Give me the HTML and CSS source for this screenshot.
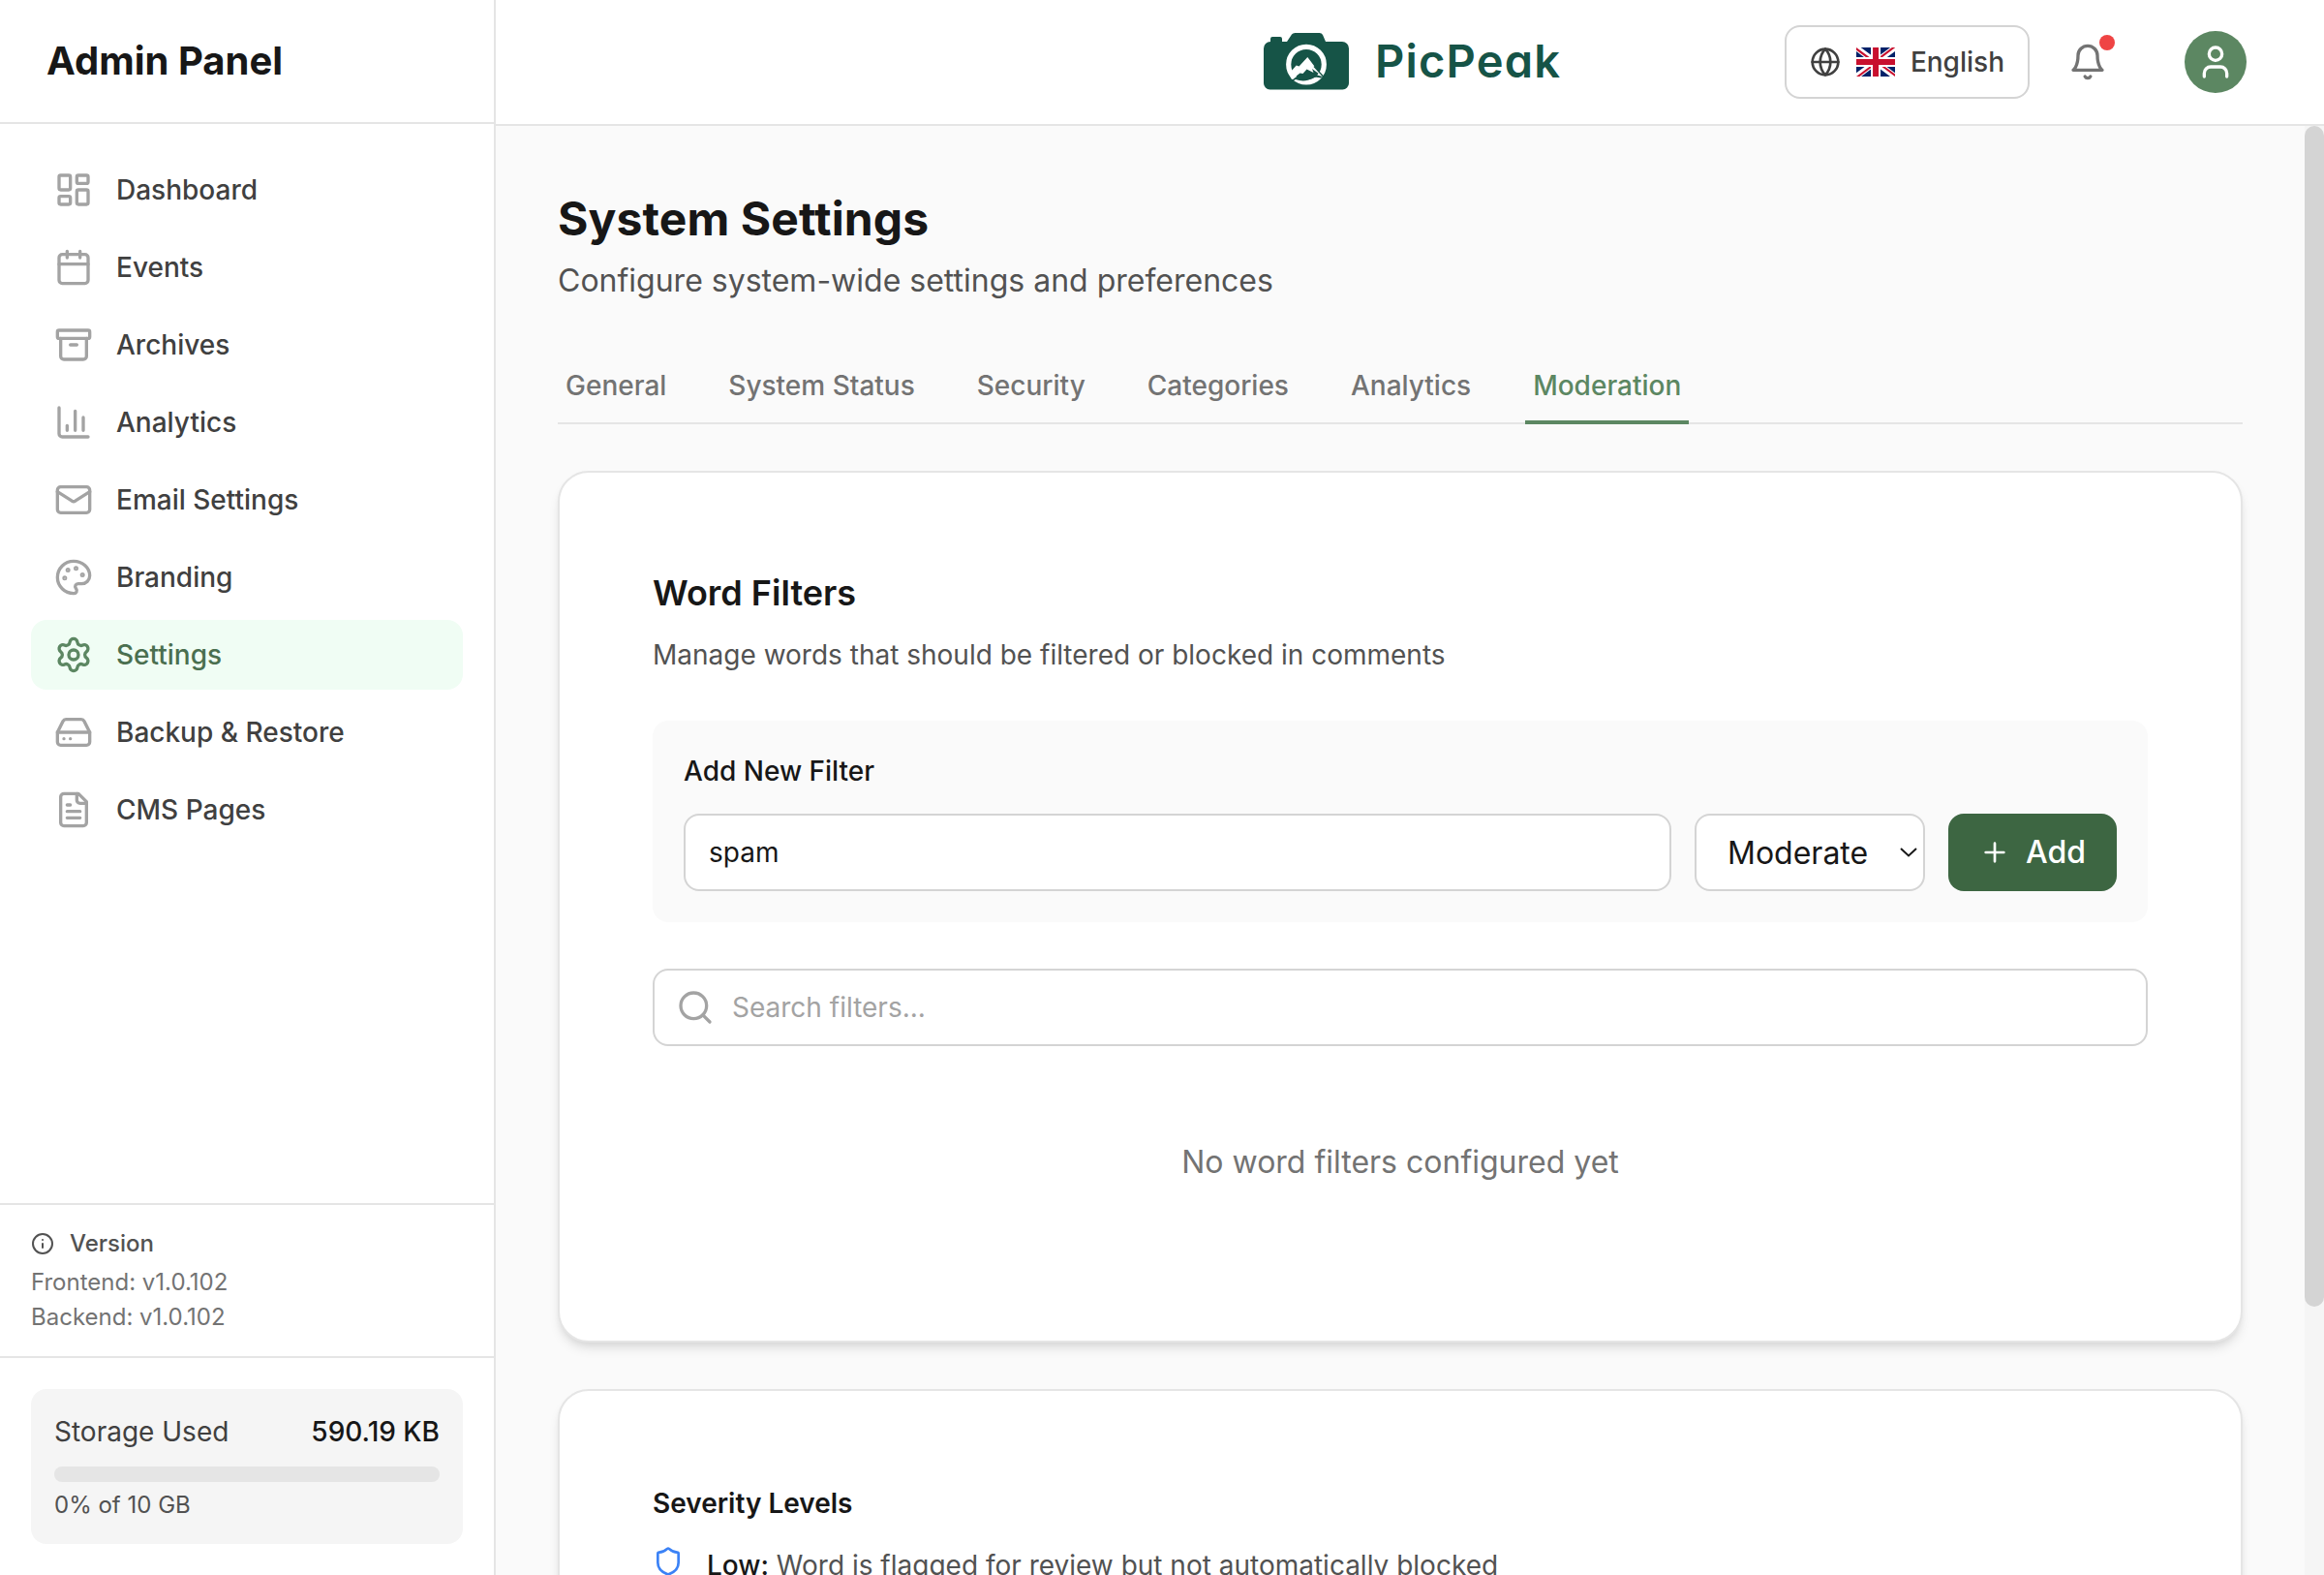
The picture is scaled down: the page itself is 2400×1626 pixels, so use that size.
FILE: index.html
```html
<!DOCTYPE html>
<html lang="en">
<head>
<meta charset="utf-8">
<title>System Settings - PicPeak</title>
<link rel="stylesheet" href="styles.css">
</head>
<body>
<div class="app">
  <aside class="sidebar">
    <div class="sidebar-title">Admin Panel</div>
    <nav class="nav">
      <a class="nav-item"><svg class="icon" viewBox="0 0 24 24"><rect width="7" height="9" x="3" y="3" rx="1"/><rect width="7" height="5" x="14" y="3" rx="1"/><rect width="7" height="9" x="14" y="12" rx="1"/><rect width="7" height="5" x="3" y="16" rx="1"/></svg>Dashboard</a>
      <a class="nav-item"><svg class="icon" viewBox="0 0 24 24"><path d="M8 2v4M16 2v4"/><rect width="18" height="18" x="3" y="4" rx="2"/><path d="M3 10h18"/></svg>Events</a>
      <a class="nav-item"><svg class="icon" viewBox="0 0 24 24"><rect width="20" height="5" x="2" y="3" rx="1"/><path d="M4 8v11a2 2 0 0 0 2 2h12a2 2 0 0 0 2-2V8"/><path d="M10 12h4"/></svg>Archives</a>
      <a class="nav-item"><svg class="icon" viewBox="0 0 24 24"><path d="M3 3v16a2 2 0 0 0 2 2h16"/><path d="M18 17V9M13 17V5M8 17v-3"/></svg>Analytics</a>
      <a class="nav-item"><svg class="icon" viewBox="0 0 24 24"><path d="m22 7-8.991 5.727a2 2 0 0 1-2.009 0L2 7"/><rect width="20" height="16" x="2" y="4" rx="2"/></svg>Email Settings</a>
      <a class="nav-item"><svg class="icon" viewBox="0 0 24 24"><path d="M12 22a1 1 0 0 1 0-20 10 9 0 0 1 10 9 5 5 0 0 1-5 5h-2.25a1.75 1.75 0 0 0-1.4 2.8l.3.4a1.75 1.75 0 0 1-1.4 2.8z"/><g fill="currentColor"><circle cx="13.5" cy="6.5" r=".5"/><circle cx="17.5" cy="10.5" r=".5"/><circle cx="6.5" cy="12.5" r=".5"/><circle cx="8.5" cy="7.5" r=".5"/></g></svg>Branding</a>
      <a class="nav-item nav-item-active"><svg class="icon" viewBox="0 0 24 24"><path d="M9.671 4.136a2.34 2.34 0 0 1 4.659 0 2.34 2.34 0 0 0 3.319 1.915 2.34 2.34 0 0 1 2.33 4.033 2.34 2.34 0 0 0 0 3.831 2.34 2.34 0 0 1-2.33 4.033 2.34 2.34 0 0 0-3.319 1.915 2.34 2.34 0 0 1-4.659 0 2.34 2.34 0 0 0-3.32-1.915 2.34 2.34 0 0 1-2.33-4.033 2.34 2.34 0 0 0 0-3.831A2.34 2.34 0 0 1 6.35 6.051a2.34 2.34 0 0 0 3.319-1.915"/><circle cx="12" cy="12" r="3"/></svg>Settings</a>
      <a class="nav-item"><svg class="icon" viewBox="0 0 24 24"><path d="M22 12H2"/><path d="M5.45 5.11 2 12v6a2 2 0 0 0 2 2h16a2 2 0 0 0 2-2v-6l-3.45-6.89A2 2 0 0 0 16.76 4H7.24a2 2 0 0 0-1.79 1.11z"/><path d="M6 16h.01M10 16h.01"/></svg>Backup &amp; Restore</a>
      <a class="nav-item"><svg class="icon" viewBox="0 0 24 24"><path d="M15 2H6a2 2 0 0 0-2 2v16a2 2 0 0 0 2 2h12a2 2 0 0 0 2-2V7Z"/><path d="M14 2v4a2 2 0 0 0 2 2h4"/><path d="M10 9H8M16 13H8M16 17H8"/></svg>CMS Pages</a>
    </nav>
    <div class="version">
      <div class="version-title"><svg class="icon icon-xs" viewBox="0 0 24 24"><circle cx="12" cy="12" r="10"/><path d="M12 16v-4M12 8h.01"/></svg>Version</div>
      <div class="version-line">Frontend: v1.0.102</div>
      <div class="version-line">Backend: v1.0.102</div>
    </div>
    <div class="storage">
      <div class="storage-card">
        <div class="storage-row"><span>Storage Used</span><strong>590.19 KB</strong></div>
        <div class="storage-bar"></div>
        <div class="storage-note">0% of 10 GB</div>
      </div>
    </div>
  </aside>
  <div class="page">
    <header class="topbar">
      <div class="logo">
        <svg class="logo-mark" viewBox="0 0 88 59"><path fill="#165447" d="M7 9V6a2 2 0 0 1 2-2h8a2 2 0 0 1 2 2v3h5l5-7.500Q30 0 32.500 0h25Q60 0 61 2l3 7h17a7 7 0 0 1 7 7v36a6.500 6.500 0 0 1-6.500 6.500h-75A6.500 6.500 0 0 1 0 52V16a7 7 0 0 1 7-7z"/><circle cx="44" cy="32.600" r="18.300" fill="none" stroke="#fff" stroke-width="5.200"/><path fill="#fff" d="M28 40l5.700-6.500 2.800 1L45.300 25 54 36.500l7 8.500-11-8 1.500 4-7-3.500-4 4.500-3-.5L29 48l-2-4z"/><path fill="#165447" d="M27 50.500c5-3 7-7.500 13.500-7.500 3 0 5-2 8-1.500 3.500.5 7 2.500 12 3.500l-1.500 1.500c-4-1-6.500-1-9 .5-5 3-11.500 3-17 1-1.500.5-3 1.500-4.500 3z"/><path fill="none" stroke="#165447" stroke-width="1.300" d="M52 34.500l10 11"/></svg>
        <span class="logo-text">PicPeak</span>
      </div>
      <div class="actions">
        <button class="language"><svg class="icon icon-sm" viewBox="0 0 24 24"><circle cx="12" cy="12" r="10"/><path d="M12 2a14.500 14.500 0 0 0 0 20 14.500 14.500 0 0 0 0-20"/><path d="M2 12h20"/></svg><svg class="flag" viewBox="0 0 640 480"><path fill="#012169" d="M0 0h640v480H0z"/><path fill="#FFF" d="m75 0 244 181L562 0h78v62L400 241l240 178v61h-80L320 301 81 480H0v-60l239-178L0 64V0z"/><path fill="#C8102E" d="m424 281 216 159v40L369 281zm-184 20 6 35L54 480H0zM640 0v3L391 191l2-44L590 0zM0 0l239 176h-60L0 42z"/><path fill="#FFF" d="M241 0v480h160V0zM0 160v160h640V160z"/><path fill="#C8102E" d="M0 193v96h640v-96zM273 0v480h96V0z"/></svg>English</button>
        <div class="bell"><svg class="icon" viewBox="0 0 24 24"><path d="M6 8a6 6 0 0 1 12 0c0 7 3 9 3 9H3s3-2 3-9"/><path d="M10.300 21a1.940 1.940 0 0 0 3.400 0"/></svg><span class="bell-dot"></span></div>
        <div class="avatar"><svg class="icon" viewBox="0 0 24 24"><path d="M19 21v-2a4 4 0 0 0-4-4H9a4 4 0 0 0-4 4v2"/><circle cx="12" cy="7" r="4"/></svg></div>
      </div>
    </header>
    <div class="body">
      <main class="content">
        <h1>System Settings</h1>
        <p class="subtitle">Configure system-wide settings and preferences</p>
        <nav class="tabs">
          <a class="tab">General</a><a class="tab">System Status</a><a class="tab">Security</a><a class="tab">Categories</a><a class="tab">Analytics</a><a class="tab tab-active">Moderation</a>
        </nav>
        <section class="card">
          <h2>Word Filters</h2>
          <p class="card-text">Manage words that should be filtered or blocked in comments</p>
          <div class="add-box">
            <h3>Add New Filter</h3>
            <div class="add-row">
              <div class="field word-field">spam</div>
              <div class="field select"><span>Moderate</span><svg class="chevron" viewBox="0 0 18 10"><path d="m1 1 8 7.500L17 1"/></svg></div>
              <button class="add-button"><svg class="icon icon-sm" viewBox="0 0 24 24"><path d="M5 12h14M12 5v14"/></svg>Add</button>
            </div>
          </div>
          <div class="field search"><svg class="icon" viewBox="0 0 24 24"><path d="m21 21-4.300-4.300"/><circle cx="11" cy="11" r="8"/></svg>Search filters...</div>
          <p class="empty">No word filters configured yet</p>
        </section>
        <section class="card">
          <h3 class="levels-title">Severity Levels</h3>
          <div class="level"><svg class="icon icon-sm" viewBox="0 0 24 24"><path d="M20 13c0 5-3.500 7.500-7.660 8.950a1 1 0 0 1-.67-.01C7.500 20.500 4 18 4 13V6a1 1 0 0 1 1-1c2 0 4.500-1.200 6.240-2.720a1.170 1.170 0 0 1 1.520 0C14.510 3.810 17 5 19 5a1 1 0 0 1 1 1z"/></svg><p><strong>Low:</strong> Word is flagged for review but not automatically blocked</p></div>
        </section>
      </main>
      <div class="scrollbar"><div class="scrollbar-thumb"></div></div>
    </div>
  </div>
</div>
</body>
</html>
```
FILE: styles.css
```css
* { box-sizing: border-box; margin: 0; padding: 0; }

body {
  height: 1626px;
  overflow: hidden;
  font-family: Inter, "Liberation Sans", sans-serif;
  font-size: 28px;
  line-height: 40px;
  color: #171717;
  background: #fafafa;
}

button { font: inherit; }

.app { display: flex; height: 1626px; }

.icon {
  display: block;
  flex: none;
  width: 40px;
  height: 40px;
  fill: none;
  stroke: currentColor;
  stroke-width: 2;
  stroke-linecap: round;
  stroke-linejoin: round;
}
.icon-sm { width: 32px; height: 32px; }
.icon-xs { width: 24px; height: 24px; }

/* Sidebar */
.sidebar {
  flex: none;
  display: flex;
  flex-direction: column;
  width: 512px;
  background: #fff;
  border-right: 2px solid #e5e5e5;
}
.sidebar-title {
  display: flex;
  align-items: center;
  height: 128px;
  padding: 0 48px;
  border-bottom: 2px solid #e5e5e5;
  font-size: 40px;
  font-weight: 700;
}
.nav {
  flex: 1;
  display: flex;
  flex-direction: column;
  gap: 8px;
  padding: 32px;
}
.nav-item {
  display: flex;
  align-items: center;
  gap: 24px;
  height: 72px;
  padding: 0 24px;
  border-radius: 16px;
  font-weight: 500;
  color: #404040;
}
.nav-item .icon { color: #a3a3a3; }
.nav-item-active { background: #f0fdf4; color: #4a6f4f; }
.nav-item-active .icon { color: #5c8762; }

.version {
  padding: 24px 32px;
  border-top: 2px solid #e5e5e5;
  border-bottom: 2px solid #e5e5e5;
  font-size: 24px;
  line-height: 32px;
  color: #737373;
}
.version-title {
  display: flex;
  align-items: center;
  gap: 16px;
  margin-bottom: 8px;
  font-weight: 500;
  color: #525252;
}
.version-line + .version-line { margin-top: 4px; }

.storage { padding: 32px; }
.storage-card { padding: 24px; border-radius: 16px; background: #f5f5f5; }
.storage-row { display: flex; justify-content: space-between; color: #404040; }
.storage-row strong { font-weight: 500; color: #171717; }
.storage-bar { height: 16px; margin: 16px 0 8px; border-radius: 8px; background: #e5e5e5; }
.storage-note { font-size: 24px; line-height: 32px; color: #525252; }

/* Top bar */
.page { flex: 1; display: flex; flex-direction: column; min-width: 0; }
.topbar {
  flex: none;
  display: flex;
  align-items: center;
  justify-content: space-between;
  height: 130px;
  padding: 0 80px 0 793px;
  border-bottom: 2px solid #e5e5e5;
  background: #fff;
}
.logo { display: flex; align-items: center; gap: 27px; padding-bottom: 2px; color: #165447; }
.logo-mark { width: 88px; height: 59px; }
.logo-text {
  font-size: 47px;
  font-weight: 600;
  letter-spacing: 1.2px;
  font-feature-settings: "cv11";
}
.actions { display: flex; align-items: center; }
.language {
  display: flex;
  align-items: center;
  gap: 16px;
  height: 76px;
  padding: 0 24px;
  border: 2px solid #d4d4d4;
  border-radius: 16px;
  background: #fff;
  font-weight: 500;
  color: #404040;
}
.flag { width: 40px; height: 30px; }
.bell { position: relative; margin: 0 80px 0 40px; color: #737373; }
.bell-dot {
  position: absolute;
  top: -8px;
  right: -8px;
  width: 16px;
  height: 16px;
  border-radius: 50%;
  background: #ef4444;
}
.avatar {
  display: flex;
  align-items: center;
  justify-content: center;
  width: 64px;
  height: 64px;
  border-radius: 50%;
  background: #5c8762;
  color: #fff;
}

/* Content */
.body { flex: 1; display: flex; min-height: 0; }
.content { flex: 1; min-width: 0; padding: 64px 64px 0; overflow: hidden; }
.scrollbar { flex: none; width: 20px; background: #f5f5f5; }
.scrollbar-thumb { height: 1219px; border-radius: 10px; background: #d4d4d4; }

h1 { font-size: 48px; line-height: 64px; font-weight: 700; letter-spacing: .1px; }
.subtitle { margin: 8px 0 48px; font-size: 32px; line-height: 48px; color: #525252; }

.tabs {
  display: flex;
  gap: 48px;
  height: 76px;
  margin-bottom: 48px;
  border-bottom: 2px solid #e5e5e5;
}
.tab {
  height: 76px;
  padding: 16px 8px;
  border-bottom: 4px solid transparent;
  font-weight: 500;
  color: #737373;
}
.tab-active { border-color: #5c8762; color: #5c8762; }

.card {
  margin-bottom: 48px;
  padding: 96px;
  border: 2px solid #e5e5e5;
  border-radius: 32px;
  background: #fff;
  box-shadow: 0 8px 12px -2px rgba(0, 0, 0, .1), 0 4px 8px -4px rgba(0, 0, 0, .1);
}
h2 { font-size: 36px; line-height: 56px; font-weight: 600; }
.card-text { margin: 16px 0 48px; color: #525252; }
.add-box { padding: 32px; border-radius: 16px; background: #fafafa; }
h3 { margin-bottom: 24px; font-size: 28px; font-weight: 500; }
.add-row { display: flex; gap: 24px; }
.field {
  display: flex;
  align-items: center;
  height: 80px;
  padding: 0 24px;
  border: 2px solid #d4d4d4;
  border-radius: 16px;
  background: #fff;
}
.word-field { flex: 1; }
.select {
  justify-content: space-between;
  width: 238px;
  padding: 0 6px 0 32px;
  font-size: 32px;
}
.select span { padding-top: 2px; }
.chevron { width: 18px; height: 10px; fill: none; stroke: #171717; stroke-width: 2; }
.add-button {
  display: flex;
  align-items: center;
  gap: 16px;
  height: 80px;
  padding: 0 32px;
  border: 0;
  border-radius: 16px;
  background: #3d6642;
  color: #fff;
  font-size: 32px;
  font-weight: 500;
}
.search { gap: 18px; margin-top: 48px; padding: 0 22px; color: #a3a3a3; }
.empty {
  padding: 96px 0 64px;
  font-size: 32px;
  line-height: 48px;
  text-align: center;
  color: #737373;
}

.levels-title { font-weight: 600; }
.level { display: flex; align-items: flex-start; gap: 24px; color: #525252; }
.level .icon { color: #3b82f6; }
.level strong { font-weight: 500; color: #171717; }
```
